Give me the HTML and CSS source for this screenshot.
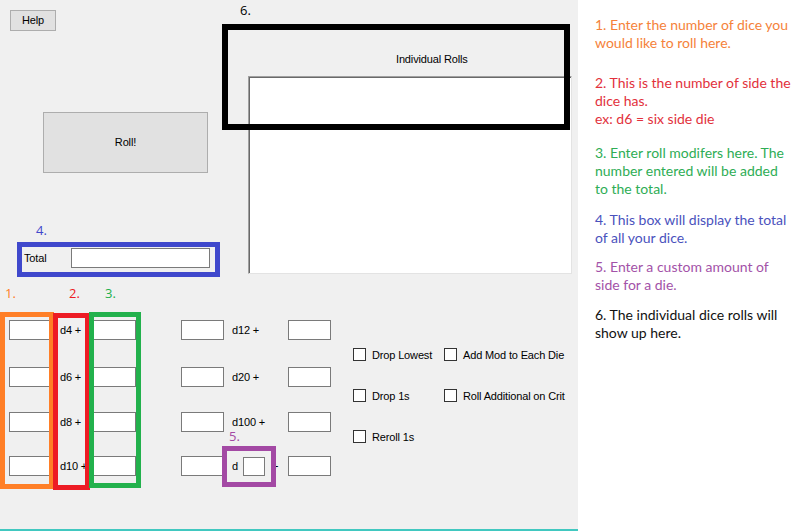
FILE: index.html
```html
<!DOCTYPE html>
<html>
<head>
<meta charset="utf-8">
<link rel="stylesheet" href="styles.css">
</head>
<body>
<div class="form">
  <div class="top">
    <div class="left-col">
      <div class="btn help">Help</div>
      <div class="btn roll">Roll!</div>
      <div class="total-row">
        <span class="total-label">Total</span>
        <div class="tb total-box"></div>
      </div>
    </div>
    <div class="rolls">
      <div class="rolls-label">Individual Rolls</div>
      <div class="listbox"></div>
    </div>
  </div>
  <div class="bottom">
    <div class="dice">
      <div class="tb"></div><div class="lbl">d4 +</div><div class="tb"></div><div></div><div class="tb"></div><div class="lbl">d12 +</div><div class="tb"></div>
      <div class="tb"></div><div class="lbl">d6 +</div><div class="tb"></div><div></div><div class="tb"></div><div class="lbl">d20 +</div><div class="tb"></div>
      <div class="tb"></div><div class="lbl">d8 +</div><div class="tb"></div><div></div><div class="tb"></div><div class="lbl">d100 +</div><div class="tb"></div>
      <div class="tb"></div><div class="lbl">d10 +</div><div class="tb"></div><div></div><div class="tb wide"></div><div class="lbl custom"><span>d</span><div class="tb small"></div><span class="plus">+</span></div><div class="tb"></div>
    </div>
    <div class="options">
      <div class="opt"><span class="check"></span><span>Drop Lowest</span></div>
      <div class="opt"><span class="check"></span><span>Add Mod to Each Die</span></div>
      <div class="opt"><span class="check"></span><span>Drop 1s</span></div>
      <div class="opt"><span class="check"></span><span>Roll Additional on Crit</span></div>
      <div class="opt"><span class="check"></span><span>Reroll 1s</span></div>
    </div>
  </div>

  <span class="num n6">6.</span>
  <div class="mark m6"></div>
  <span class="num n4">4.</span>
  <div class="mark m4"></div>
  <span class="num n1">1.</span>
  <span class="num n2">2.</span>
  <span class="num n3">3.</span>
  <div class="mark m1"></div>
  <div class="mark m2"></div>
  <div class="mark m3"></div>
  <span class="num n5">5.</span>
  <div class="mark m5"></div>
</div>
<div class="notes">
  <p class="c1 p1">1. Enter the number of dice you<br>would like to roll here.</p>
  <p class="c2 p2">2. This is the number of side the<br>dice has.<br>ex: d6 = six side die</p>
  <p class="c3 p3">3. Enter roll modifers here. The<br>number entered will be added<br>to the total.</p>
  <p class="c4 p4">4. This box will display the total<br>of all your dice.</p>
  <p class="c5 p5">5. Enter a custom amount of<br>side for a die.</p>
  <p class="c6 p6">6. The individual dice rolls will<br>show up here.</p>
</div>
</body>
</html>
```
FILE: styles.css
```css
html, body {
  margin: 0;
  padding: 0;
}
body {
  display: flex;
  width: 812px;
  height: 531px;
  overflow: hidden;
  background: #ffffff;
}
.form {
  position: relative;
  width: 578px;
  height: 531px;
  box-sizing: border-box;
  background: #f0f0f0;
  border-bottom: 2px solid #41c8c0;
  font-family: "Liberation Sans", Arial, sans-serif;
  font-size: 11px;
  letter-spacing: -0.15px;
  color: #000;
}
.top {
  display: flex;
  height: 320px;
}
.left-col {
  width: 248px;
  flex: none;
}
.btn {
  box-sizing: border-box;
  background: #e1e1e1;
  border: 1px solid #adadad;
  display: flex;
  align-items: center;
  justify-content: center;
  line-height: 13px;
}
.help {
  margin: 10px 0 0 10px;
  width: 46px;
  height: 21px;
}
.roll {
  margin: 81px 0 0 43px;
  width: 165px;
  height: 61px;
}
.total-row {
  display: flex;
  align-items: center;
  margin-top: 75px;
  padding-left: 24px;
}
.total-label {
  width: 47px;
}
.tb {
  box-sizing: border-box;
  background: #fff;
  border: 1px solid #7a7a7a;
  height: 20px;
}
.total-box {
  width: 139px;
}
.rolls {
  display: flex;
  flex-direction: column;
}
.rolls-label {
  margin-top: 53px;
  padding-left: 148px;
  line-height: 13px;
}
.listbox {
  margin-top: 10px;
  box-sizing: border-box;
  width: 324px;
  height: 198px;
  background: #fff;
  border-style: solid;
  border-width: 1px;
  border-color: #a0a0a0 #e3e3e3 #e3e3e3 #a0a0a0;
  box-shadow: inset 1px 1px 0 #696969;
}
.bottom {
  display: flex;
  align-items: flex-start;
}
.dice {
  display: grid;
  padding-left: 9px;
  grid-template-columns: 43px 41px 43px 45px 43px 64px 43px;
  grid-template-rows: 47px 45px 44px 20px;
  align-items: start;
}
.dice > div {
  height: 20px;
}
.lbl {
  display: flex;
  align-items: center;
  padding-left: 8px;
  white-space: nowrap;
}
.custom {
  padding-left: 8px;
}
.dice .tb.small {
  width: 22px;
  height: 19px;
  margin-left: 5px;
}
.plus {
  margin-left: 7px;
}
.options {
  display: grid;
  grid-template-columns: 91px auto;
  grid-auto-rows: 13px;
  row-gap: 28px;
  margin: 28px 0 0 22px;
}
.opt {
  display: flex;
  align-items: center;
  gap: 6px;
  white-space: nowrap;
  height: 13px;
}
.check {
  box-sizing: border-box;
  width: 13px;
  height: 13px;
  background: #fff;
  border: 1px solid #333;
  flex: none;
}

/* annotation overlays */
.num {
  position: absolute;
  font-family: "Open Sans", "Liberation Sans", sans-serif;
  font-size: 13px;
  line-height: 14px;
  letter-spacing: 0;
}
.mark {
  position: absolute;
  box-sizing: border-box;
  border-style: solid;
}
.n6 { left: 240px; top: 3px; color: #000; }
.m6 { left: 222px; top: 24px; width: 348px; height: 106px; border-width: 6px; border-color: #000; }
.n4 { left: 36px; top: 223px; color: #3f48cc; }
.m4 { left: 17px; top: 242px; width: 203px; height: 35px; border-width: 5px; border-color: #3f48cc; }
.n1 { left: 5px; top: 286px; color: #ff7f27; }
.n2 { left: 69px; top: 286px; color: #ed1c24; }
.n3 { left: 105px; top: 286px; color: #22b14c; }
.m1 { left: 0; top: 312px; width: 54px; height: 177px; border-width: 5px; border-color: #ff7f27; }
.m2 { left: 53px; top: 313px; width: 37px; height: 177px; border-width: 5px; border-color: #ed1c24; }
.m3 { left: 89px; top: 312px; width: 52px; height: 176px; border-width: 5px; border-color: #22b14c; }
.n5 { left: 229px; top: 429px; color: #a349a4; }
.m5 { left: 222px; top: 446px; width: 54px; height: 41px; border-width: 5px; border-color: #a349a4; }

/* notes panel */
.notes {
  flex: 1;
  padding: 16px 0 0 17px;
  font-family: "Lato", "Open Sans", sans-serif;
  font-size: 14px;
  line-height: 18px;
  white-space: nowrap;
}
.notes p {
  margin: 0;
}
.p2 { margin-top: 22px !important; }
.p3 { margin-top: 16px !important; }
.p4 { margin-top: 13px !important; }
.p5 { margin-top: 11px !important; }
.p6 { margin-top: 12px !important; }
.c1 { color: #f5823a; }
.c2 { color: #e2313c; }
.c3 { color: #2ead55; }
.c4 { color: #4a52bd; }
.c5 { color: #a352a8; }
.c6 { color: #111; }
```
